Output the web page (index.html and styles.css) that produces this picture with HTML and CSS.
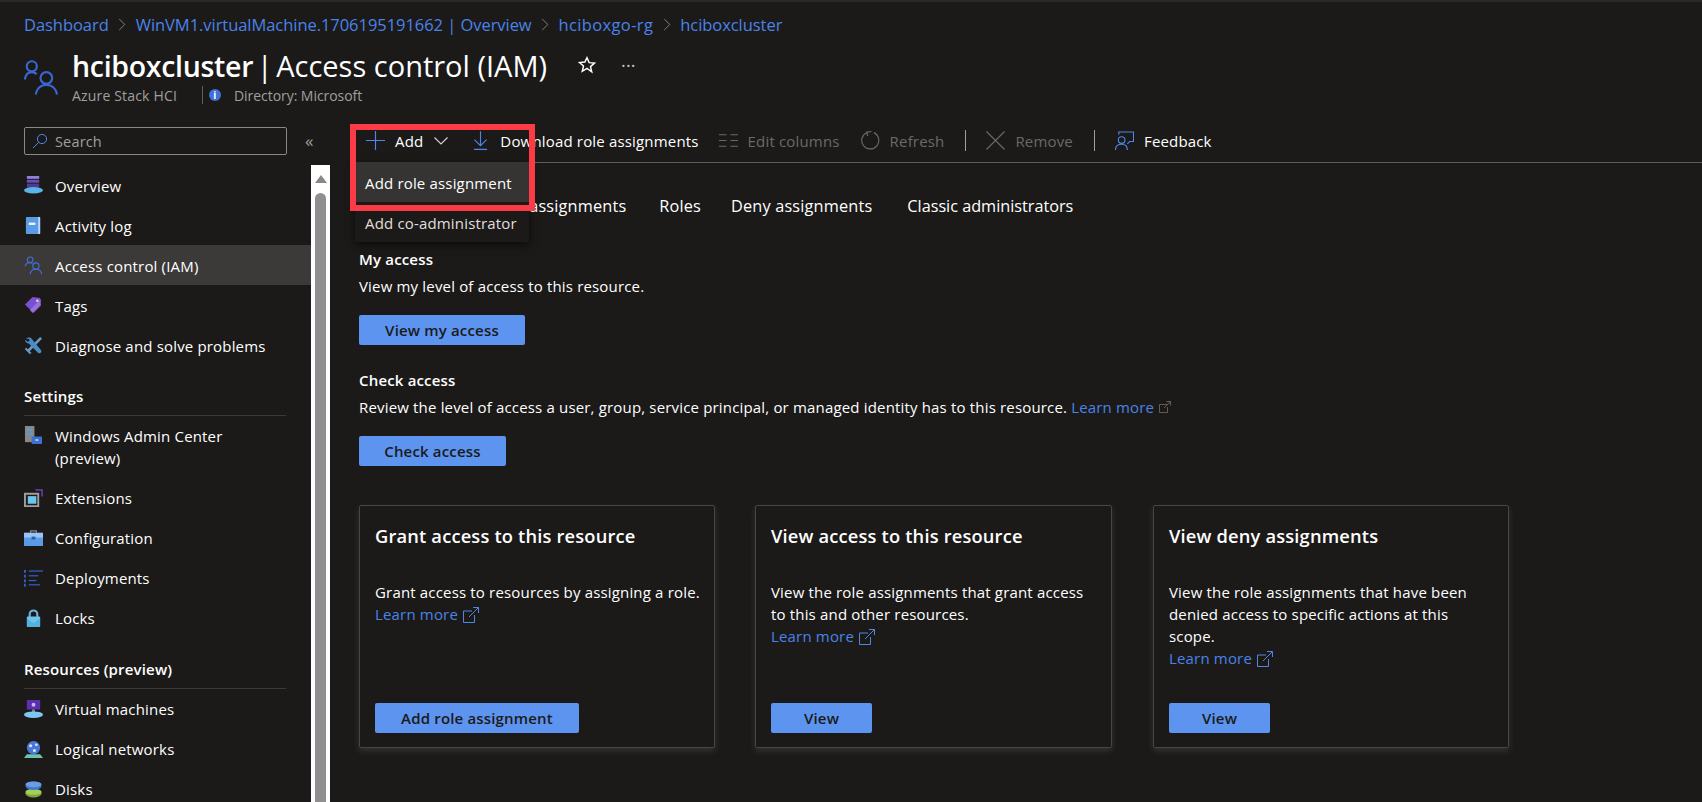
FILE: index.html
```html
<!DOCTYPE html>
<html lang="en">
<head>
    <meta charset="UTF-8">
    <meta name="viewport" content="width=device-width, initial-scale=1.0">
    <title>hciboxcluster | Access control (IAM)</title>
    <link rel="stylesheet" href="styles.css">
</head>
<body>

    <nav class="breadcrumb">
        <a>Dashboard</a>
        <svg class="crumb-sep" viewBox="0 0 8 14"><path d="M1 1l6 6-6 6"/></svg>
        <a>WinVM1.virtualMachine.1706195191662 | Overview</a>
        <svg class="crumb-sep" viewBox="0 0 8 14"><path d="M1 1l6 6-6 6"/></svg>
        <a class="crumb-wide">hciboxgo-rg</a>
        <svg class="crumb-sep" viewBox="0 0 8 14"><path d="M1 1l6 6-6 6"/></svg>
        <a>hciboxcluster</a>
    </nav>

    <header class="page-head">
        <svg class="head-icon" viewBox="0 0 36 36">
            <circle cx="8" cy="6" r="5.2"/><path d="M.8 19.500c.8-4.500 3.500-7.500 7.200-7.500 2 0 3.500.6 5 2"/>
            <circle cx="23" cy="18" r="6"/><path d="M12 35c1-6 5-10 11-10s10 4 11 10"/>
        </svg>
        <div class="head-text">
            <div class="head-title">
                <h1><span class="title-name"><b>hciboxcluster</b> | </span>Access control (IAM)</h1>
                <svg class="star" viewBox="0 0 16 16"><path d="M8 1.500l1.900 4.400 4.800.4-3.600 3.100 1.100 4.700L8 11.100l-4.200 2.500 1.100-4.700-3.600-3.100 4.800-.4z"/></svg>
                <span class="dots">···</span>
            </div>
            <div class="head-sub">
                <span>Azure Stack HCI</span>
                <i class="head-divider"></i>
                <span class="info-dot">i</span>
                <span class="head-dir">Directory: Microsoft</span>
            </div>
        </div>
    </header>

    <div class="layout">
        <aside class="sidebar">
            <div class="search-row">
                <div class="search-box">
                    <svg viewBox="0 0 16 16"><circle cx="10" cy="6" r="4.600"/><path d="M6.600 9.400L1 15"/></svg>
                    <span>Search</span>
                </div>
                <span class="collapse">«</span>
            </div>

            <div class="menu-wrap">
                <ul class="menu">
                    <li class="menu-item">
                        <svg viewBox="0 0 20 20"><path fill="#8f7fd6" d="M3 0h13v3H3z"/><path fill="#6a4fb8" d="M3 4h13v3H3z"/><path fill="#4d3a94" d="M3 8h13v4H3z"/><ellipse fill="#5ab4e8" cx="10" cy="15" rx="10" ry="3.400"/></svg>
                        <span>Overview</span>
                    </li>
                    <li class="menu-item">
                        <svg viewBox="0 0 20 20"><rect fill="#5a9be6" x="2" y="1" width="15" height="18" rx="1"/><rect fill="#bcd8f6" x="15" y="1" width="2" height="18"/><rect fill="#f0f6fc" x="5" y="7" width="7" height="2.400"/></svg>
                        <span>Activity log</span>
                    </li>
                    <li class="menu-item is-active">
                        <svg class="line-icon" viewBox="0 0 20 20"><circle cx="6.500" cy="4" r="3"/><path d="M1 11c.6-2.500 2.600-4 5.500-4 1 0 1.800.2 2.500.6"/><circle cx="12.500" cy="10.500" r="3.300"/><path d="M6.500 19c.4-3 2.800-5 6-5s5.600 2 6 5"/></svg>
                        <span>Access control (IAM)</span>
                    </li>
                    <li class="menu-item">
                        <svg viewBox="0 0 20 20"><path fill="#7a4fd0" d="M1 9l8-8 8 1 1 8-8 8z"/><path fill="#a98ae0" d="M9 18l8-8 1-7-12 12z" opacity=".6"/><circle fill="#ddd" cx="14" cy="5" r="1.300"/></svg>
                        <span>Tags</span>
                    </li>
                    <li class="menu-item">
                        <svg viewBox="0 0 20 20"><path fill="#6fa8d8" d="M17 1l2 2-13 13 2 2-2 1-5-5 1-2 2 2z" opacity=".9"/><path fill="#4a8cc4" d="M2 3c2-2 5-2 6 0l10 12c1 2-1 4-3 3L5 8C3 8 1 6 1 4l3 2 2-1-1-2z"/></svg>
                        <span>Diagnose and solve problems</span>
                    </li>

                    <li class="menu-group">Settings</li>
                    <li class="menu-item is-tall">
                        <svg viewBox="0 0 20 20"><rect fill="#8a8886" x="1" y="0" width="10" height="17"/><rect fill="#50a0e0" x="3" y="3" width="6" height="2"/><rect fill="#50a0e0" x="3" y="7" width="6" height="2"/><rect fill="#3f6fd0" x="8" y="11" width="11" height="8" rx="1"/><rect fill="#cfe2f8" x="12" y="14" width="3" height="1.500"/></svg>
                        <span>Windows Admin Center<br>(preview)</span>
                    </li>
                    <li class="menu-item">
                        <svg viewBox="0 0 20 20"><path fill="none" stroke="#a19f9d" stroke-width="2" d="M1 5h14v13H1z"/><path fill="none" stroke="#6a3fc0" stroke-width="1.500" d="M12 1h7v7"/><rect fill="#6cc5ec" x="4" y="7.500" width="9" height="8"/></svg>
                        <span>Extensions</span>
                    </li>
                    <li class="menu-item">
                        <svg viewBox="0 0 20 20"><path fill="none" stroke="#8a8886" stroke-width="1.400" d="M7 4V2h6v2"/><rect fill="#5a9be6" x="0" y="4" width="20" height="14" rx="1"/><rect fill="#9cc4f2" x="0" y="4" width="20" height="5"/><rect fill="#2f5ea8" x="8" y="8" width="4" height="3"/></svg>
                        <span>Configuration</span>
                    </li>
                    <li class="menu-item">
                        <svg viewBox="0 0 20 20"><g fill="#2f5fc8"><rect x="0" y="1" width="2" height="3"/><rect x="0" y="6" width="2" height="3"/><rect x="0" y="11" width="2" height="3"/><rect x="0" y="15.500" width="2" height="3"/><rect x="5" y="1.500" width="15" height="1.300"/><rect x="5" y="6.500" width="10" height="1.300"/><rect x="5" y="11.500" width="8" height="1.300"/><rect x="5" y="16" width="12" height="1.300"/></g></svg>
                        <span>Deployments</span>
                    </li>
                    <li class="menu-item">
                        <svg viewBox="0 0 20 20"><path fill="none" stroke="#6cb4de" stroke-width="2.200" d="M6 9V5.500a4 4 0 018 0V9"/><rect fill="#6cc5ec" x="3" y="8" width="14" height="11" rx="1"/><path fill="#3f9ccf" d="M3 10l7 5 7-5v9H3z" opacity=".5"/></svg>
                        <span>Locks</span>
                    </li>

                    <li class="menu-group">Resources (preview)</li>
                    <li class="menu-item">
                        <svg viewBox="0 0 20 20"><rect fill="#5a2fb0" x="3" y="0" width="14" height="10"/><circle fill="#c8b8f0" cx="10" cy="5" r="2"/><rect fill="#8a8886" x="8.500" y="10" width="3" height="3"/><ellipse fill="#7cc8f0" cx="10" cy="15.500" rx="10" ry="3.500"/></svg>
                        <span>Virtual machines</span>
                    </li>
                    <li class="menu-item">
                        <svg viewBox="0 0 20 20"><path fill="#6fc3ac" d="M0 19l3-4h14l3 4z"/><circle fill="#4a78d8" cx="10" cy="8" r="7"/><circle fill="#dce8f8" cx="7" cy="6" r="1.600"/><circle fill="#dce8f8" cx="13" cy="5" r="1.400"/><circle fill="#dce8f8" cx="11" cy="11" r="1.600"/></svg>
                        <span>Logical networks</span>
                    </li>
                    <li class="menu-item">
                        <svg viewBox="0 0 20 20"><ellipse fill="#7ba83c" cx="10" cy="14" rx="8.500" ry="4.500"/><ellipse fill="#a6ce5a" cx="10" cy="12.500" rx="8.500" ry="3"/><ellipse fill="#3f78d0" cx="10" cy="6" rx="8.500" ry="4.500"/><ellipse fill="#6c9ce4" cx="10" cy="4.500" rx="8.500" ry="3"/></svg>
                        <span>Disks</span>
                    </li>
                </ul>
                <div class="scrollbar">
                    <span class="scroll-up"></span>
                    <span class="scroll-thumb"></span>
                </div>
            </div>
        </aside>

        <main class="content">
            <div class="toolbar">
                <div class="tool tool-add">
                    <svg class="tool-icon blue" viewBox="0 0 20 20"><path d="M10 0v20M0 10h20"/></svg>
                    <span>Add</span>
                    <svg class="tool-chevron" viewBox="0 0 14 8"><path d="M.5.5L7 7l6.500-6.500"/></svg>
                </div>
                <div class="tool tool-download">
                    <svg class="tool-icon is-narrow blue" viewBox="0 0 16 20"><path d="M8 0v15M1.500 9L8 15.500 14.500 9M1 19.500h14"/></svg>
                    <span>Download role assignments</span>
                </div>
                <div class="tool is-off">
                    <svg class="tool-icon grey" viewBox="0 0 20 14"><path d="M0 1h8M12 1h8M0 7h8M12 7h8M0 13h8M12 13h8"/></svg>
                    <span>Edit columns</span>
                </div>
                <div class="tool is-off">
                    <svg class="tool-icon grey" viewBox="0 0 20 20"><path d="M6.500 1.500A9 9 0 1013.500 1.700M6 .5l1 5M6 1.500l5-1"/></svg>
                    <span>Refresh</span>
                </div>
                <i class="tool-sep"></i>
                <div class="tool is-off">
                    <svg class="tool-icon grey" viewBox="0 0 20 20"><path d="M.5.500l19 19M19.500.500l-19 19"/></svg>
                    <span>Remove</span>
                </div>
                <i class="tool-sep"></i>
                <div class="tool">
                    <svg class="tool-icon blue" viewBox="0 0 20 20"><circle cx="7" cy="9.500" r="3.500"/><path d="M.5 20c0-3.500 2.500-6 6.500-6s6 2.500 6 6M4 4V1h15.500v10h-4l-2.500 2.500"/></svg>
                    <span>Feedback</span>
                </div>
            </div>

            <div class="tabs">
                <a>Role assignments</a>
                <a>Roles</a>
                <a class="tab-deny">Deny assignments</a>
                <a class="tab-classic">Classic administrators</a>
            </div>

            <section class="access-block">
                <h3>My access</h3>
                <p>View my level of access to this resource.</p>
                <button class="btn btn-my">View my access</button>
            </section>

            <section class="access-block">
                <h3>Check access</h3>
                <p>Review the level of access a user, group, service principal, or managed identity has to this resource.
                    <a class="link">Learn more</a>
                    <svg class="ext-icon is-small" viewBox="0 0 12 12"><path d="M8 3.500H.5v8h8V6M5 7l6.500-6.500M7.500.500h4v4"/></svg>
                </p>
                <button class="btn btn-check">Check access</button>
            </section>

            <div class="cards">
                <article class="card">
                    <h2>Grant access to this resource</h2>
                    <p>Grant access to resources by assigning a role.<br>
                        <a class="link">Learn more</a>
                        <svg class="ext-icon" viewBox="0 0 16 16"><path d="M9 4H.5v11.500h11V8M6 10L15.500.500M10 .500h5.500V6"/></svg>
                    </p>
                    <button class="btn btn-add">Add role assignment</button>
                </article>
                <article class="card card-mid">
                    <h2>View access to this resource</h2>
                    <p>View the role assignments that grant access<br>to this and other resources.<br>
                        <a class="link">Learn more</a>
                        <svg class="ext-icon" viewBox="0 0 16 16"><path d="M9 4H.5v11.500h11V8M6 10L15.500.500M10 .500h5.500V6"/></svg>
                    </p>
                    <button class="btn btn-view">View</button>
                </article>
                <article class="card">
                    <h2>View deny assignments</h2>
                    <p>View the role assignments that have been<br>denied access to specific actions at this<br>scope.<br>
                        <a class="link">Learn more</a>
                        <svg class="ext-icon" viewBox="0 0 16 16"><path d="M9 4H.5v11.500h11V8M6 10L15.500.500M10 .500h5.500V6"/></svg>
                    </p>
                    <button class="btn btn-view">View</button>
                </article>
            </div>

            <div class="add-menu">
                <div class="add-menu-item is-hover">Add role assignment</div>
                <div class="add-menu-item is-plain">Add co-administrator</div>
            </div>
            <div class="red-box"></div>
        </main>
    </div>

</body>
</html>
```

FILE: styles.css
```css
* {
    box-sizing: border-box;
}
html, body {
    height: 100%;
}
body {
    margin: 0;
    overflow: hidden;
    background-color: #1b1a19;
    border-top: 2px solid #2a2928;
    color: #fff;
    font-family: "Open Sans", "Noto Sans", sans-serif;
    font-size: 15px;
    letter-spacing: 0.17px;
}
a {
    color: #4a83e8;
}
ul {
    margin: 0;
    padding: 0;
    list-style: none;
}
svg {
    flex: none;
}

/* breadcrumb and title */
.breadcrumb {
    display: flex;
    align-items: center;
    gap: 9.500px;
    height: 45px;
    padding-left: 24px;
    font-size: 16.5px;
    letter-spacing: -0.05px;
}
.crumb-wide {
    letter-spacing: 0.35px;
}
.crumb-sep {
    width: 8px;
    height: 13px;
    fill: none;
    stroke: #8a8886;
    stroke-width: 1;
}
.page-head {
    display: flex;
    height: 72px;
    padding-left: 24px;
}
.head-icon {
    width: 35px;
    height: 36px;
    margin-top: 13px;
    fill: none;
    stroke: #3a66d0;
    stroke-width: 2.200;
}
.head-text {
    margin-left: 13px;
}
.head-title {
    display: flex;
    align-items: center;
    height: 36px;
}
h1 {
    margin: 0;
    font-size: 29px;
    font-weight: 400;
    letter-spacing: 0;
}
.title-name {
    word-spacing: -4px;
}
h1 b {
    font-size: 28.500px;
    font-weight: 600;
    letter-spacing: -0.3px;
}
.star {
    width: 18px;
    height: 18px;
    margin-left: 31px;
    fill: none;
    stroke: #fff;
    stroke-width: 1.300;
}
.dots {
    margin-left: 25px;
    color: #c8c6c4;
    font-size: 18px;
}
.head-sub {
    display: flex;
    align-items: center;
    height: 24px;
    color: #a19f9d;
    font-size: 14px;
}
.head-dir {
    letter-spacing: -0.05px;
}
.head-divider {
    width: 1px;
    height: 18px;
    margin: 0 6px 0 25px;
    background-color: #605e5c;
}
.info-dot {
    width: 12px;
    height: 12px;
    margin-right: 13px;
    border-radius: 50%;
    background-color: #3f6fd8;
    color: #fff;
    font-size: 10px;
    font-weight: 700;
    line-height: 12px;
    text-align: center;
}

.layout {
    display: flex;
    height: 683px;
}

/* left column */
.sidebar {
    width: 330px;
    flex: none;
}
.search-row {
    display: flex;
    align-items: center;
    height: 46px;
    padding: 8px 0 10px 24px;
}
.search-box {
    display: flex;
    align-items: center;
    gap: 7px;
    width: 263px;
    height: 28px;
    padding-left: 7px;
    border: 1px solid #8a8886;
    border-radius: 2px;
    color: #a19f9d;
    font-size: 14.500px;
}
.search-box svg {
    width: 16px;
    height: 16px;
    fill: none;
    stroke: #4f86e8;
    stroke-width: 1;
}
.collapse {
    margin-left: 18px;
    color: #a19f9d;
    font-size: 17px;
    line-height: 20px;
}
.menu-wrap {
    display: flex;
    height: 637px;
}
.menu {
    width: 311px;
}
.menu-item {
    display: flex;
    align-items: center;
    gap: 12px;
    height: 40px;
    padding-left: 24px;
}
.menu-item:nth-child(-n+5) {
    padding-top: 1px;
}
.menu-item svg {
    width: 19px;
    height: 19px;
}
.menu-item.is-active {
    background-color: #3b3a39;
}
.menu-item.is-tall {
    align-items: flex-start;
    height: 62px;
    padding-top: 9px;
    line-height: 22px;
}
.menu-item.is-tall svg {
    margin-top: 1px;
}
.line-icon {
    fill: none;
    stroke: #3f6fd8;
    stroke-width: 1.200;
}
.menu-group {
    height: 51px;
    margin: 0 25px 0 24px;
    padding-top: 21px;
    border-bottom: 1px solid #3b3a39;
    font-weight: 600;
    line-height: 20px;
}
.scrollbar {
    display: flex;
    flex-direction: column;
    align-items: center;
    width: 19px;
    background-color: #fff;
}
.scroll-up {
    width: 0;
    height: 0;
    margin: 10px 0 10px;
    border-left: 6px solid transparent;
    border-right: 6px solid transparent;
    border-bottom: 8px solid #8a8886;
}
.scroll-thumb {
    flex: 1;
    width: 11px;
    border-radius: 6px 6px 0 0;
    background-color: #8f8f8f;
}

/* right column */
.content {
    position: relative;
    flex: 1;
    padding-left: 29px;
}
.toolbar {
    display: flex;
    align-items: center;
    height: 44px;
    padding-left: 7px;
    border-bottom: 1px solid #605e5c;
}
.tool {
    display: flex;
    align-items: center;
    gap: 10px;
    margin-right: 20px;
}
.tool-add {
    margin-right: 25px;
}
.tool-download {
    gap: 12px;
}
.tool.is-off {
    margin-right: 21px;
    color: #6b6967;
}
.tool-icon {
    width: 19px;
    height: 19px;
    fill: none;
    stroke-width: 1.200;
}
.tool-icon.is-narrow {
    width: 15px;
}
.tool-icon.blue {
    stroke: #4f86e8;
}
.tool-icon.grey {
    stroke: #6b6967;
}
.tool-chevron {
    width: 14px;
    height: 8px;
    margin-left: 1px;
    fill: none;
    stroke: #d2d0ce;
    stroke-width: 1.200;
}
.tool-sep {
    width: 1px;
    height: 21px;
    margin-right: 20px;
    background-color: #a19f9d;
}
.tabs {
    display: flex;
    gap: 33px;
    height: 85px;
    padding: 32px 0 0 132px;
    font-size: 16.300px;
    line-height: 22px;
}
.tabs a {
    color: #fff;
}
.tabs .tab-deny {
    margin-left: -3px;
}
.tabs .tab-classic {
    margin-left: 2px;
    letter-spacing: -0.03px;
}
.access-block {
    height: 121px;
}
.access-block h3 {
    margin: 0;
    font-size: 15px;
    font-weight: 600;
    line-height: 22px;
}
.access-block p {
    margin: 5px 0 18px;
    line-height: 22px;
}
.link {
    margin-right: 1px;
}
.btn {
    display: block;
    height: 30px;
    padding: 0;
    border: 0;
    border-radius: 2px;
    background-color: #5c94f0;
    color: #1b1a19;
    font-family: inherit;
    font-size: 15px;
    font-weight: 600;
    letter-spacing: inherit;
}
.btn-my {
    width: 166px;
}
.btn-check {
    width: 147px;
}
.btn-add {
    width: 204px;
}
.btn-view {
    width: 101px;
}
.ext-icon {
    width: 16px;
    height: 16px;
    vertical-align: -3px;
    fill: none;
    stroke: #4f86e8;
    stroke-width: 1;
}
.ext-icon.is-small {
    width: 12px;
    height: 12px;
    vertical-align: 0;
    stroke: #605e5c;
}
.cards {
    display: flex;
    gap: 40px;
    margin-top: 15px;
}
.card {
    display: flex;
    flex-direction: column;
    width: 356px;
    height: 243px;
    padding: 18px 15px 14px;
    border: 1px solid #484644;
    border-radius: 2px;
    box-shadow: 0 3px 6px rgba(90, 90, 90, 0.4);
}
.card-mid {
    width: 357px;
    margin-right: 1px;
}
.card h2 {
    margin: 0 0 33px;
    font-size: 18.300px;
    font-weight: 600;
    line-height: 24px;
}
.card p {
    flex: 1;
    margin: 0;
    line-height: 22px;
    white-space: nowrap;
}
.card .btn {
    flex: none;
}

/* open dropdown and highlight box */
.add-menu {
    position: absolute;
    top: 43px;
    left: 25px;
    width: 174px;
    background-color: #1b1a19;
    box-shadow: 0 3px 8px rgba(0, 0, 0, 0.6);
}
.add-menu-item {
    height: 40px;
    padding: 1px 0 0 10px;
    line-height: 40px;
}
.add-menu-item.is-hover {
    background-color: #353433;
}
.add-menu-item.is-plain {
    color: #e1dfdd;
}
.red-box {
    position: absolute;
    top: 5px;
    left: 20px;
    width: 185px;
    height: 87px;
    border: 6px solid #fb3c46;
}
```
